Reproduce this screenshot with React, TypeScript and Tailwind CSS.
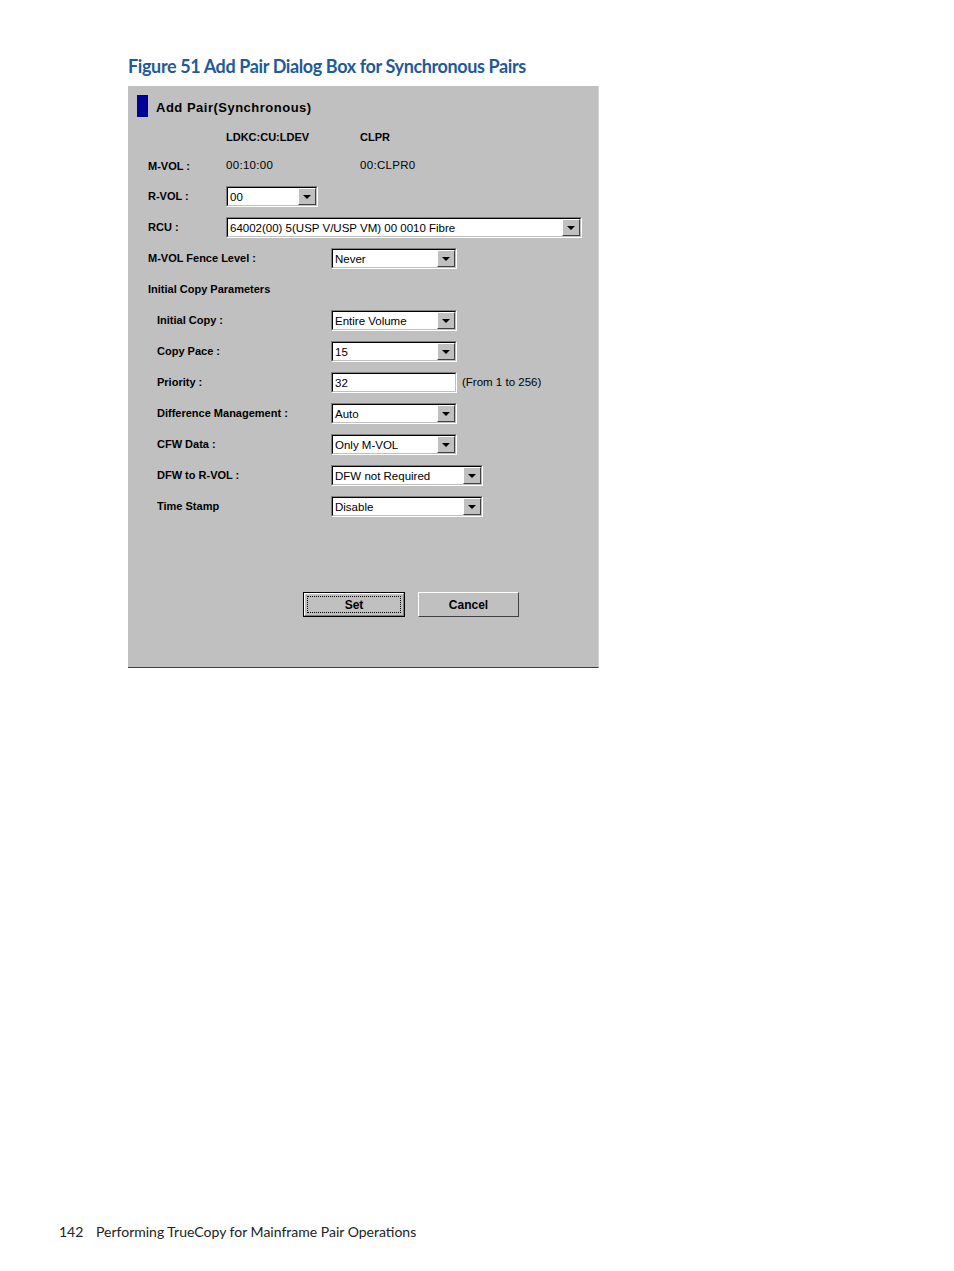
import React from "react";

const UI = "font-['Liberation_Sans',Arial,sans-serif]";

function Arrow() {
  return (
    <div className="flex h-full w-[18px] items-center justify-center border border-t-white border-l-white border-r-[#404040] border-b-[#404040] bg-[#c0c0c0]">
      <svg width="8" height="4" viewBox="0 0 8 4">
        <path d="M0 0h8L4 4z" fill="#000" />
      </svg>
    </div>
  );
}

function Field({ value, className, combo = true }: { value: string; className: string; combo?: boolean }) {
  return (
    <div className={`flex h-[21px] border border-t-[#808080] border-l-[#808080] border-b-white border-r-white ${className}`}>
      <div className="flex flex-1 border border-t-black border-l-black border-b-[#c0c0c0] border-r-[#c0c0c0] bg-white">
        <div className="flex-1 overflow-hidden whitespace-nowrap pl-[2px] text-[11.5px] leading-[18px] text-black">{value}</div>
        {combo && <Arrow />}
      </div>
    </div>
  );
}

function Row({ children, indent = false }: { children: React.ReactNode; indent?: boolean }) {
  return <div className={`flex h-[31px] items-center ${indent ? "pl-[29px]" : "pl-[20px]"}`}>{children}</div>;
}

function Label({ text, className }: { text: string; className: string }) {
  return <div className={`shrink-0 text-[11px] font-bold text-black ${className}`}>{text}</div>;
}

const PARAMS = [
  { label: "Initial Copy :", value: "Entire Volume", w: "w-[126px]" },
  { label: "Copy Pace :", value: "15", w: "w-[126px]" },
  { label: "Priority :", value: "32", w: "w-[126px]", text: true },
  { label: "Difference Management :", value: "Auto", w: "w-[126px]" },
  { label: "CFW Data :", value: "Only M-VOL", w: "w-[126px]" },
  { label: "DFW to R-VOL :", value: "DFW not Required", w: "w-[152px]" },
  { label: "Time Stamp", value: "Disable", w: "w-[152px]" },
];

export default function App() {
  return (
    <div className="flex h-[1271px] w-[954px] flex-col bg-white">
      <div className="pl-[128px] pt-[54px]">
        <h1 className="font-['Lato',sans-serif] text-[18px] font-bold leading-[24px] tracking-[-0.38px] text-[#1f5a99]">
          Figure 51 Add Pair Dialog Box for Synchronous Pairs
        </h1>

        <div className={`mt-[8px] h-[582px] w-[471px] border-b border-r border-b-[#404040] border-r-[#d4d4d4] bg-[#c0c0c0] pt-[9px] ${UI}`}>
          <div className="flex h-[22px] items-center pl-[9px]">
            <div className="h-[22px] w-[11px] bg-[#000096]" />
            <div className="ml-[8px] pt-[3px] text-[13px] font-bold tracking-[0.5px] text-black">Add Pair(Synchronous)</div>
          </div>

          <div className="mt-[6px] flex h-[28px] items-center pl-[98px]">
            <Label text="LDKC:CU:LDEV" className="w-[134px]" />
            <Label text="CLPR" className="" />
          </div>

          <div className="flex h-[30px] items-center pl-[20px]">
            <Label text="M-VOL :" className="w-[78px]" />
            <div className="w-[134px] text-[11.5px] tracking-[0.3px] text-black">00:10:00</div>
            <div className="text-[11.5px] tracking-[0.3px] text-black">00:CLPR0</div>
          </div>

          <Row>
            <Label text="R-VOL :" className="w-[78px]" />
            <Field value="00" className="w-[92px]" />
          </Row>

          <Row>
            <Label text="RCU :" className="w-[78px]" />
            <Field value="64002(00) 5(USP V/USP VM) 00 0010 Fibre" className="w-[356px]" />
          </Row>

          <Row>
            <Label text="M-VOL Fence Level :" className="w-[183px]" />
            <Field value="Never" className="w-[126px]" />
          </Row>

          <Row>
            <Label text="Initial Copy Parameters" className="" />
          </Row>

          {PARAMS.map((p) => (
            <Row key={p.label} indent>
              <Label text={p.label} className="w-[174px]" />
              <Field value={p.value} className={p.w} combo={!p.text} />
              {p.text && <div className="ml-[5px] text-[11.5px] text-black">(From 1 to 256)</div>}
            </Row>
          ))}

          <div className="mt-[70px] flex gap-[13px] pl-[175px]">
            <button className="h-[25px] w-[102px] border border-black bg-[#c0c0c0] p-0">
              <div className="h-full w-full border border-t-white border-l-white border-r-[#808080] border-b-[#808080] p-[2px]">
                <div className="flex h-full w-full items-center justify-center border border-dotted border-black text-[12px] font-bold text-black">
                  Set
                </div>
              </div>
            </button>
            <button className="flex h-[25px] w-[101px] items-center justify-center border border-t-white border-l-white border-r-[#404040] border-b-[#404040] bg-[#c0c0c0] text-[12px] font-bold text-black">
              Cancel
            </button>
          </div>
        </div>
      </div>

      <div className="mt-auto flex pb-[29px] pl-[59px] font-['Lato',sans-serif] text-[14px] leading-[20px] text-[#222]">
        <span className="w-[37px]">142</span>
        <span>Performing TrueCopy for Mainframe Pair Operations</span>
      </div>
    </div>
  );
}
